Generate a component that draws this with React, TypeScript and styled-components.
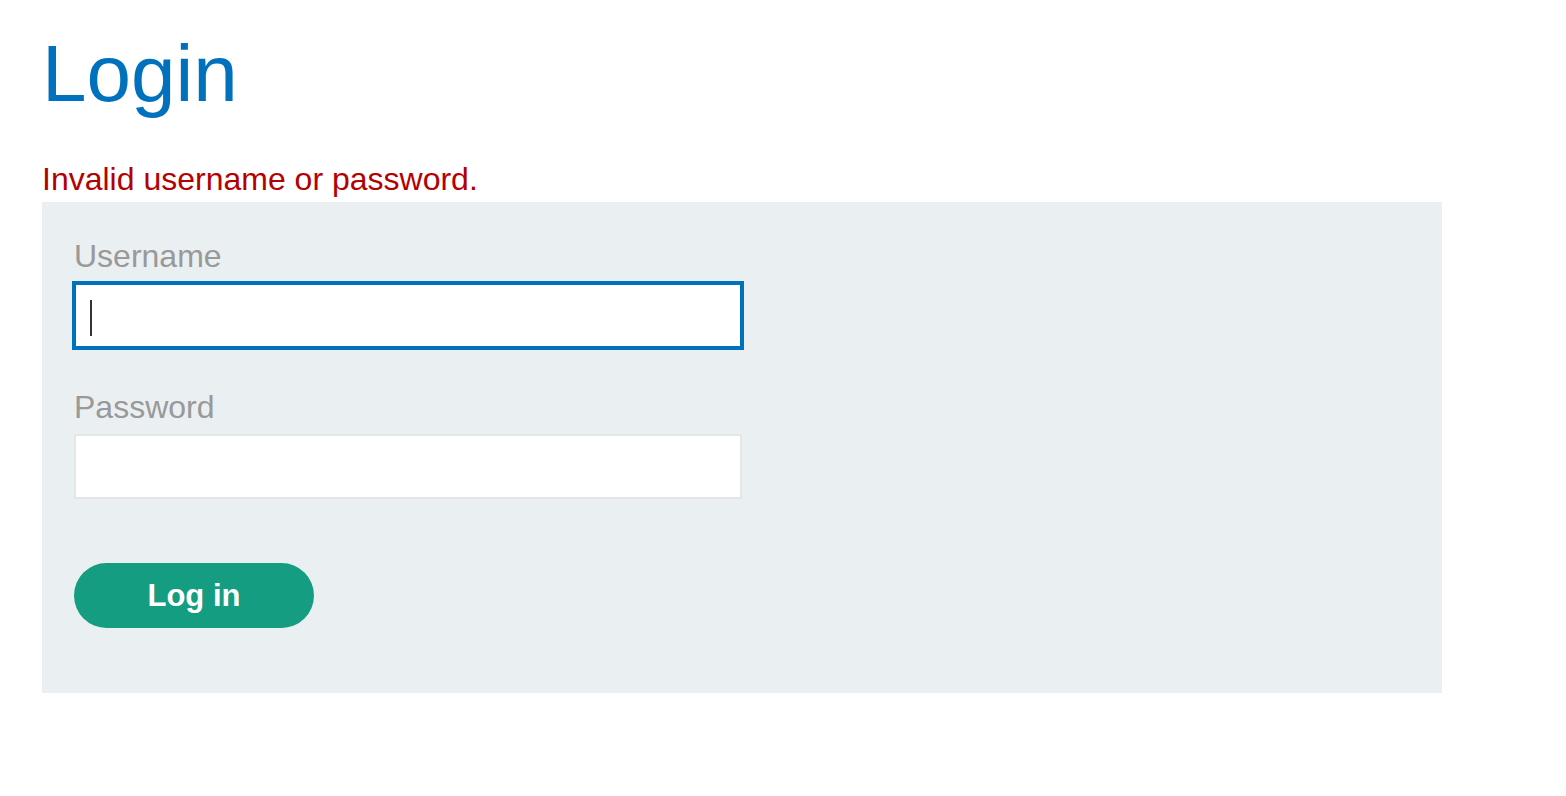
import React from "react";
import styled, { createGlobalStyle } from "styled-components";

const GlobalStyle = createGlobalStyle`
  html, body {
    margin: 0;
    padding: 0;
    background: #ffffff;
  }
  body {
    font-family: "Liberation Sans", Arial, Helvetica, sans-serif;
  }
  * { box-sizing: border-box; }
`;

const Page = styled.main`
  padding: 34px 0 0 42px;
  width: 1566px;
`;

const Heading = styled.h1`
  margin: 0 0 50px;
  font-size: 80px;
  line-height: 80px;
  font-weight: 400;
  color: #0071bc;
`;

const ErrorText = styled.p`
  margin: 0 0 8px;
  font-size: 32px;
  line-height: 30px;
  color: #b50000;
`;

const Panel = styled.form`
  width: 1400px;
  background: #eaeff2;
  padding: 40px 32px 65px;
  display: flex;
  flex-direction: column;
  align-items: flex-start;
`;

const Field = styled.div<{ $last?: boolean }>`
  display: flex;
  flex-direction: column;
  margin-bottom: ${(p) => (p.$last ? "64px" : "45px")};
`;

const Label = styled.label`
  font-size: 32px;
  line-height: 29px;
  color: #999999;
  margin-bottom: 12px;
`;

const InputWrap = styled.div`
  position: relative;
  width: 668px;
`;

const Input = styled.input<{ $focused?: boolean }>`
  display: block;
  width: 668px;
  height: 65px;
  margin: 0;
  padding: 0 14px;
  background: #ffffff;
  border: 2px solid ${(p) => (p.$focused ? "#0071bc" : "#e4e6e7")};
  box-shadow: ${(p) => (p.$focused ? "0 0 0 2px #0071bc" : "none")};
  border-radius: 0;
  font-family: "Liberation Sans", Arial, sans-serif;
  font-size: 28px;
  color: #333;
  outline: none;
`;

const Caret = styled.span`
  position: absolute;
  left: 16px;
  top: 17px;
  width: 2px;
  height: 36px;
  background: #333333;
`;

const Button = styled.button`
  width: 240px;
  height: 65px;
  border: none;
  border-radius: 33px;
  background: #159d82;
  color: #ffffff;
  font-family: "Liberation Sans", Arial, sans-serif;
  font-weight: 700;
  font-size: 31px;
  line-height: 65px;
  padding: 0;
  cursor: pointer;
`;

export default function App() {
  return (
    <>
      <GlobalStyle />
      <Page>
        <Heading>Login</Heading>
        <ErrorText>Invalid username or password.</ErrorText>
        <Panel onSubmit={(e) => e.preventDefault()}>
          <Field>
            <Label htmlFor="username">Username</Label>
            <InputWrap>
              <Input id="username" type="text" $focused />
              <Caret />
            </InputWrap>
          </Field>
          <Field $last>
            <Label htmlFor="password">Password</Label>
            <InputWrap>
              <Input id="password" type="password" />
            </InputWrap>
          </Field>
          <Button type="submit">Log in</Button>
        </Panel>
      </Page>
    </>
  );
}
